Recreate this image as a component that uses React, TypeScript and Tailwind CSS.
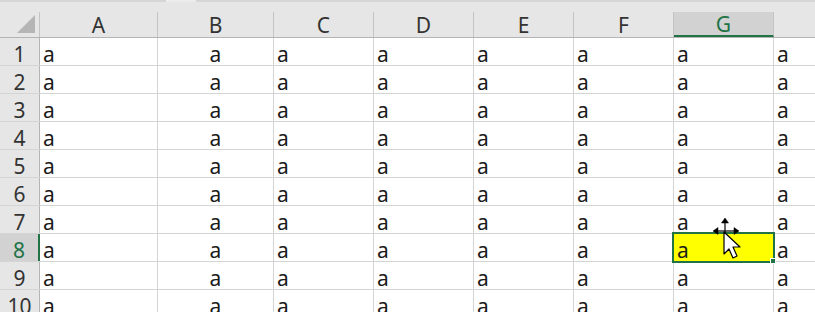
import React from 'react';

const columns = [
  { name: 'A', width: 118, align: 'left' },
  { name: 'B', width: 116, align: 'center' },
  { name: 'C', width: 100, align: 'left' },
  { name: 'D', width: 100, align: 'left' },
  { name: 'E', width: 100, align: 'left' },
  { name: 'F', width: 100, align: 'left' },
  { name: 'G', width: 100, align: 'left' },
  { name: 'H', width: 100, align: 'left' },
];

const rows = [1, 2, 3, 4, 5, 6, 7, 8, 9, 10];

const activeCol = 'G';
const activeRow = 8;

function MoveCursor() {
  return (
    <svg
      className="absolute left-[710px] top-[216px] pointer-events-none"
      width="40"
      height="48"
      viewBox="0 0 40 48"
    >
      {/* four-way move arrows */}
      <g fill="#000" stroke="#000" strokeWidth="1.2">
        <line x1="4" y1="15" x2="28" y2="15" />
        <line x1="15" y1="3" x2="15" y2="18" />
        <polygon points="3,15 8,11.5 8,18.5" strokeWidth="0.5" />
        <polygon points="29,15 24,11.5 24,18.5" strokeWidth="0.5" />
        <polygon points="15,2 11.5,7 18.5,7" strokeWidth="0.5" />
      </g>
      {/* pointer arrow */}
      <path
        d="M14 16 L14 38 L19 33 L23 42 L27 40 L23 31 L30 31 Z"
        fill="#fff"
        stroke="#000"
        strokeWidth="1.2"
        strokeLinejoin="round"
      />
    </svg>
  );
}

export default function App() {
  return (
    <div
      className="relative w-[815px] h-[312px] overflow-hidden bg-white text-[#222]"
      style={{ fontFamily: '"Noto Sans", "Noto Sans CJK SC", sans-serif' }}
    >
      {/* header */}
      <div className="flex flex-col h-[38px] bg-[#e6e6e6] border-b border-[#b4b4b4] w-max">
        <div className="flex h-[2px]">
          <div className="w-[166px] bg-[#d6d6d6]" />
          <div className="w-[30px] bg-[#ececec]" />
          <div className="w-[700px] bg-[#d6d6d6]" />
        </div>
        <div className="flex pt-[10px]">
          <div className="w-[40px] shrink-0 h-[25px] border-r border-[#c4c4c4] flex items-end justify-end pr-[3px] pb-[3px]">
            <svg width="20" height="20" viewBox="0 0 20 20">
              <polygon points="1,19 19,19 19,1" fill="#b5b5b5" />
            </svg>
          </div>
          {columns.map((c) => {
            const active = c.name === activeCol;
            return (
              <div
                key={c.name}
                className={
                  active
                    ? 'shrink-0 h-[25px] bg-[#d2d2d2] border-b-2 border-[#217346] border-r border-r-[#c4c4c4] flex items-end justify-center text-[21px] leading-[22px] text-[#217346]'
                    : 'shrink-0 h-[25px] border-r border-[#c4c4c4] flex items-end justify-center pb-[1px] text-[21px] leading-[22px] text-[#333]'
                }
                style={{ width: c.width }}
              >
                {c.name}
              </div>
            );
          })}
        </div>
      </div>

      {/* data rows */}
      {rows.map((r) => {
        const rowActive = r === activeRow;
        return (
          <div key={r} className="flex h-[28px] w-max border-b border-[#d4d4d4]">
            <div
              className={
                rowActive
                  ? 'w-[40px] shrink-0 bg-[#d2d2d2] border-r-2 border-[#217346] flex items-end justify-center text-[21px] leading-[22px] text-[#217346]'
                  : 'w-[40px] shrink-0 bg-[#e6e6e6] border-r border-[#b4b4b4] flex items-end justify-center text-[21px] leading-[22px] text-[#333]'
              }
            >
              {r}
            </div>
            {columns.map((c) => {
              const active = rowActive && c.name === activeCol;
              return (
                <div
                  key={c.name}
                  className={
                    (active ? 'relative bg-[#ffff00] ' : '') +
                    (c.align === 'center' ? 'justify-center ' : 'justify-start pl-[3px] ') +
                    'shrink-0 border-r border-[#d4d4d4] flex items-end text-[21px] leading-[22px] text-[#1a1a1a]'
                  }
                  style={{ width: c.width }}
                >
                  a
                  {active && (
                    <>
                      <div className="absolute left-[-2px] top-[-2px] w-[103px] h-[31px] border-2 border-[#217346]" />
                      <div className="absolute left-[96px] top-[24px] w-[6px] h-[6px] bg-[#217346] border border-white" />
                    </>
                  )}
                </div>
              );
            })}
          </div>
        );
      })}

      <MoveCursor />
    </div>
  );
}
